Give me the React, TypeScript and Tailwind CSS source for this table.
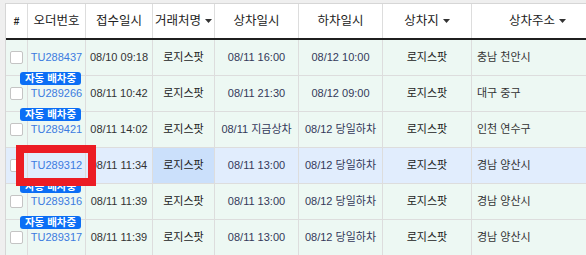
import React from "react";

type Row = {
  id: string;
  recv: string;
  load: string;
  unload: string;
  addr: string;
  badge: boolean;
  selected?: boolean;
};

const rows: Row[] = [
  { id: "TU288437", recv: "08/10 09:18", load: "08/11 16:00", unload: "08/12 10:00", addr: "충남 천안시", badge: false },
  { id: "TU289266", recv: "08/11 10:42", load: "08/11 21:30", unload: "08/12 09:00", addr: "대구 중구", badge: true },
  { id: "TU289421", recv: "08/11 14:02", load: "08/11 지금상차", unload: "08/12 당일하차", addr: "인천 연수구", badge: true },
  { id: "TU289312", recv: "08/11 11:34", load: "08/11 13:00", unload: "08/12 당일하차", addr: "경남 양산시", badge: false, selected: true },
  { id: "TU289316", recv: "08/11 11:39", load: "08/11 13:00", unload: "08/12 당일하차", addr: "경남 양산시", badge: true },
  { id: "TU289317", recv: "08/11 11:39", load: "08/11 13:00", unload: "08/12 당일하차", addr: "경남 양산시", badge: true },
];

const Caret = () => (
  <svg width="7" height="4" viewBox="0 0 7 4" className="ml-[4px] inline-block">
    <path d="M0 0 L7 0 L3.5 4 Z" fill="#333" />
  </svg>
);

const cell = "shrink-0 flex items-center justify-center border-r border-[#dddddd] whitespace-nowrap";

export default function App() {
  return (
    <div
      className="w-[586px] h-[255px] overflow-hidden bg-[#efefef] pt-[3px] pl-[5px]"
      style={{ fontFamily: '"Liberation Sans", "Noto Sans CJK KR", sans-serif' }}
    >
      <div className="w-[700px] border-l border-t border-[#d6d6d6] bg-white">
        {/* header */}
        <div className="flex h-[36px] border-b-2 border-[#1f1f1f] bg-white text-[12.5px] text-[#222]">
          <div className={`${cell} w-[22px] text-[10px] font-bold`}>#</div>
          <div className={`${cell} w-[58px]`}>오더번호</div>
          <div className={`${cell} w-[67px]`}>접수일시</div>
          <div className={`${cell} w-[62px]`}>
            거래처명
            <Caret />
          </div>
          <div className={`${cell} w-[84px]`}>상차일시</div>
          <div className={`${cell} w-[84px]`}>하차일시</div>
          <div className={`${cell} w-[89px]`}>
            상차지
            <Caret />
          </div>
          <div className={`${cell} w-[132px]`}>
            상차주소
            <Caret />
          </div>
        </div>
        {/* body */}
        {rows.map((r) => (
          <div
            key={r.id}
            className={`relative flex h-[36px] border-b border-[#dddddd] text-[11px] text-[#333] ${
              r.selected ? "bg-[#e1edfd]" : "bg-[#edf8f3]"
            }`}
          >
            {r.badge && (
              <div className="absolute left-[14px] top-[-4px] z-10 flex h-[13px] w-[61px] items-center justify-center rounded-[3px] bg-[#0b6ef5] text-[10.5px] font-bold leading-none text-white">
                자동 배차중
              </div>
            )}
            {r.selected && (
              <div className="absolute left-[10px] top-[-3px] z-20 h-[41px] w-[80px] border-[8px] border-[#ec1c24]" />
            )}
            <div className={`${cell} w-[22px]`}>
              <div className="h-[13px] w-[13px] rounded-[2px] border border-[#c4c4c4] bg-white" />
            </div>
            <div className={`${cell} w-[58px] text-[#3c7be0]`}>{r.id}</div>
            <div className={`${cell} w-[67px]`}>{r.recv}</div>
            <div className={`${cell} w-[62px] text-[#222] ${r.selected ? "bg-[#cbe0fb]" : ""}`}>로지스팟</div>
            <div className={`${cell} w-[84px] text-[#34395a]`}>{r.load}</div>
            <div className={`${cell} w-[84px] text-[#34395a]`}>{r.unload}</div>
            <div className={`${cell} w-[89px] text-[#222]`}>로지스팟</div>
            <div className="flex w-[132px] shrink-0 items-center pl-[5px] text-[#333]">{r.addr}</div>
          </div>
        ))}
      </div>
    </div>
  );
}
